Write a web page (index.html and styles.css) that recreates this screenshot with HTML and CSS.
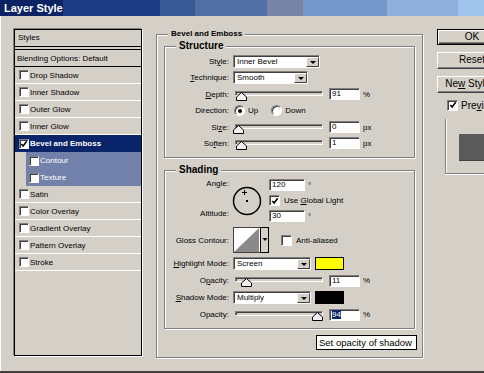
FILE: index.html
```html
<!DOCTYPE html>
<html>
<head>
    <meta charset="utf-8">
    <title>Layer Style</title>
    <link rel="stylesheet" href="styles.css">
</head>
<body>
<div class="window">

    <!-- window caption -->
    <div class="titlebar">Layer Style</div>

    <div class="client">

        <!-- STYLES LIST -->
        <div class="styles-list">
            <div class="list-head">Styles</div>
            <div class="list-row blend">Blending Options: Default</div>
            <div class="list-row"><span class="cb"></span>Drop Shadow</div>
            <div class="list-row"><span class="cb"></span>Inner Shadow</div>
            <div class="list-row"><span class="cb"></span>Outer Glow</div>
            <div class="list-row"><span class="cb"></span>Inner Glow</div>
            <div class="list-row sel"><span class="cb"><svg class="tick" viewBox="0 0 9 9"><path d="M1.5 4.5l2 2.2 4-5.2"/></svg></span>Bevel and Emboss</div>
            <div class="list-row sub"><span class="cb"></span>Contour</div>
            <div class="list-row sub"><span class="cb"></span>Texture</div>
            <div class="list-row"><span class="cb"></span>Satin</div>
            <div class="list-row"><span class="cb"></span>Color Overlay</div>
            <div class="list-row"><span class="cb"></span>Gradient Overlay</div>
            <div class="list-row"><span class="cb"></span>Pattern Overlay</div>
            <div class="list-row"><span class="cb"></span>Stroke</div>
        </div>

        <!-- BEVEL AND EMBOSS -->
        <fieldset class="group main">
            <legend>Bevel and Emboss</legend>

            <fieldset class="group sub-group structure">
                <legend>Structure</legend>
                <div class="rows">
                    <div class="row">
                        <span class="lbl">St<u>y</u>le:</span>
                        <div class="select w87"><span>Inner Bevel</span><span class="drop"></span></div>
                    </div>
                    <div class="row">
                        <span class="lbl"><u>T</u>echnique:</span>
                        <div class="select w75"><span>Smooth</span><span class="drop"></span></div>
                    </div>
                    <div class="row">
                        <span class="lbl"><u>D</u>epth:</span>
                        <div class="slider"><div class="track"></div><svg class="thumb" style="left:3px" viewBox="0 0 11 9"><path d="M5.5 .5 10.5 5v3.5H.5V5z"/></svg></div>
                        <div class="field">91</div><span class="unit">%</span>
                    </div>
                    <div class="row">
                        <span class="lbl">Direction:</span>
                        <span class="radio on"></span><span class="opt">Up</span>
                        <span class="radio second"></span><span class="opt">Down</span>
                    </div>
                    <div class="row">
                        <span class="lbl">Si<u>z</u>e:</span>
                        <div class="slider"><div class="track"></div><svg class="thumb" style="left:0px" viewBox="0 0 11 9"><path d="M5.5 .5 10.5 5v3.5H.5V5z"/></svg></div>
                        <div class="field">0</div><span class="unit">px</span>
                    </div>
                    <div class="row">
                        <span class="lbl">So<u>f</u>ten:</span>
                        <div class="slider"><div class="track"></div><svg class="thumb" style="left:3px" viewBox="0 0 11 9"><path d="M5.5 .5 10.5 5v3.5H.5V5z"/></svg></div>
                        <div class="field">1</div><span class="unit">px</span>
                    </div>
                </div>
            </fieldset>

            <fieldset class="group sub-group shading">
                <legend>Shading</legend>
                <div class="rows">
                    <div class="angle-block">
                        <div class="lbl-col"><span>Angle:</span><span>Altitude:</span></div>
                        <svg class="dial" viewBox="0 0 30 30">
                            <circle cx="15" cy="15" r="13.5"/>
                            <rect x="14" y="14" width="2" height="2"/>
                            <path d="M10 6.5h5M12.5 4v5"/>
                        </svg>
                        <div class="angle-fields">
                            <div class="row"><div class="field wide">120</div><span class="unit">°</span></div>
                            <div class="row"><span class="cb"><svg class="tick" viewBox="0 0 9 9"><path d="M1.5 4.5l2 2.2 4-5.2"/></svg></span><span class="cb-text">Use <u>G</u>lobal Light</span></div>
                            <div class="row"><div class="field wide">30</div><span class="unit">°</span></div>
                        </div>
                    </div>
                    <div class="row tall">
                        <span class="lbl">Gloss Contour:</span>
                        <svg class="contour" viewBox="0 0 36 26">
                            <rect x=".5" y=".5" width="27" height="25" fill="#fff" stroke="#404040"/>
                            <path d="M1 25 26 1v24z" fill="#8a8a8a"/>
                            <rect x="27.5" y=".5" width="8" height="25" fill="#d4d0c8" stroke="#000"/>
                            <path d="M29.5 11h5l-2.5 3z" fill="#000"/>
                        </svg>
                        <span class="cb aa"></span><span class="cb-text">Anti-aliased</span>
                    </div>
                    <div class="row">
                        <span class="lbl"><u>H</u>ighlight Mode:</span>
                        <div class="select w78"><span>Screen</span><span class="drop"></span></div>
                        <span class="swatch yellow"></span>
                    </div>
                    <div class="row">
                        <span class="lbl">O<u>p</u>acity:</span>
                        <div class="slider"><div class="track"></div><svg class="thumb" style="left:8px" viewBox="0 0 11 9"><path d="M5.5 .5 10.5 5v3.5H.5V5z"/></svg></div>
                        <div class="field">11</div><span class="unit">%</span>
                    </div>
                    <div class="row">
                        <span class="lbl"><u>S</u>hadow Mode:</span>
                        <div class="select w78"><span>Multiply</span><span class="drop"></span></div>
                        <span class="swatch black"></span>
                    </div>
                    <div class="row">
                        <span class="lbl">Opacity:</span>
                        <div class="slider"><div class="track"></div><svg class="thumb" style="left:79px" viewBox="0 0 11 9"><path d="M5.5 .5 10.5 5v3.5H.5V5z"/></svg></div>
                        <div class="field"><span class="picked">94</span></div><span class="unit">%</span>
                    </div>
                </div>
            </fieldset>

            <div class="tooltip">Set opacity of shadow</div>
        </fieldset>

        <!-- BUTTONS -->
        <div class="side">
            <div class="btn default">OK</div>
            <div class="btn">Reset</div>
            <div class="btn">Ne<u>w</u> Style...</div>
            <div class="preview-check">
                <span class="cb"><svg class="tick" viewBox="0 0 9 9"><path d="M1.5 4.5l2 2.2 4-5.2"/></svg></span>
                <span>Pre<u>v</u>iew</span>
            </div>
            <div class="preview-box"><div class="preview-swatch"></div></div>
        </div>

    </div>
</div>
</body>
</html>
```

FILE: styles.css
```css
/* GLOBAL THEME */
body        {   margin: 0;
                background-color: #d4d0c8;
                font-family: "Liberation Sans", Arial, sans-serif;
                font-size: 8px;
                color: #000;
            }

u           {   text-underline-offset: 1px; }

.window     {   width: 484px;
                height: 373px;
                overflow: hidden;
                display: flex;
                flex-direction: column;
            }

/* CAPTION */
.titlebar   {   flex: none;
                height: 16px;
                line-height: 16px;
                padding-left: 4px;
                color: white;
                font-size: 11px;
                font-weight: bold;
                background: linear-gradient(to right,
                    #0b2263 0 63px, #1d3b82 63px 160px, #3a5a96 160px 195px,
                    #5070a6 195px 267px, #7784a6 267px 303px, #7496c8 303px 387px,
                    #8fb0dc 387px 458px, #9ec4ec 458px);
            }

.client     {   flex: 1;
                display: flex;
                align-items: flex-start;
                border-bottom: 2px solid #404040;
                box-shadow: inset 1px 0 0 #fff;
            }

/* CHECKBOX (sunken) */
.cb         {   flex: none;
                width: 11px;
                height: 11px;
                box-sizing: border-box;
                display: flex;
                align-items: center;
                justify-content: center;
                background: #fff;
                border: 1px solid;
                border-color: #808080 #fff #fff #808080;
                box-shadow: inset 1px 1px 0 #404040;
            }
.tick       {   width: 8px; height: 8px; }
.tick path  {   fill: none; stroke: #000; stroke-width: 1.7; }
.cb-text    {   margin-left: 4px; }

/* STYLES LIST */
.styles-list {  flex: none;
                margin: 13px 0 0 14px;
                width: 126px;
                height: 325px;
                border: 1px solid #000;
                box-shadow: -1px -1px 0 #808080, 1px 1px 0 #fff;
            }
.list-head  {   height: 16px;
                line-height: 16px;
                padding-left: 3px;
                border-bottom: 1px solid #000;
                margin-bottom: 2px;
            }
.list-row   {   height: 16px;
                display: flex;
                align-items: center;
                padding-left: 4px;
                border-bottom: 1px solid #fff;
            }
.list-row .cb { width: 10px; height: 10px; margin-right: 1px; }
.list-row.blend { padding-left: 2px; border-top: 1px solid #000; border-bottom-color: #000; }
.list-row.sel   { height: 17px; border-bottom: none; background: #0a246a; color: #fff; font-weight: bold; }
.list-row.sub   { height: 17px; border-bottom: none; margin-left: 11px; padding-left: 3px;
                  background: #7181a9; color: #fff; }

/* GROUP BOXES (etched) */
.group      {   margin: 0;
                padding: 0;
                min-width: 0;
                box-sizing: border-box;
                border: 1px solid #808080;
                box-shadow: 1px 1px 0 #fff, inset 1px 1px 0 #fff;
            }
.group > legend { padding: 0 3px; background: #d4d0c8; font-weight: bold; line-height: 10px; }

.main       {   position: relative;
                flex: none;
                margin: 13px 0 0 14px;
                width: 267px;
                height: 329px;
                padding: 1px 7px 0 7px;
            }
.main > legend  { margin-left: 4px; }

.sub-group  {   width: 251px; }
.sub-group > legend { margin-left: 11px; font-size: 10px; line-height: 12px; }
.structure  {   height: 118px; }
.shading    {   height: 165px; margin-top: 6px; }

.rows       {   display: flex; flex-direction: column; padding-top: 3px; }
.structure .rows { gap: 3.4px; }
.shading .rows   { gap: 4px; }

.row        {   display: flex; align-items: center; height: 13px; }
.row.tall   {   height: 26px; }
.lbl        {   flex: none; width: 64px; margin-right: 4px; text-align: right; }
.unit       {   margin-left: 3px; }
.opt        {   margin-left: 3px; }

/* DROPDOWN */
.select     {   height: 13px;
                box-sizing: border-box;
                display: flex;
                align-items: center;
                padding-left: 3px;
                background: #fff;
                border: 1px solid;
                border-color: #808080 #fff #fff #808080;
                box-shadow: inset 1px 1px 0 #404040;
            }
.w87 { width: 87px; }
.w78 { width: 78px; }
.w75 { width: 75px; }
.select .drop { margin-left: auto;
                width: 13px;
                height: 10px;
                margin-top: 1px;
                box-sizing: border-box;
                display: flex;
                align-items: center;
                justify-content: center;
                background: #d4d0c8;
                border: 1px solid;
                border-color: #fff #404040 #404040 #fff;
            }
.select .drop::after { content: ""; border-top: 3px solid #000; border-left: 3px solid transparent; border-right: 3px solid transparent; }

/* TEXT FIELD */
.field      {   flex: none;
                width: 31px;
                height: 12px;
                box-sizing: border-box;
                margin-left: 6px;
                padding-left: 2px;
                line-height: 10px;
                background: #fff;
                border: 1px solid;
                border-color: #808080 #fff #fff #808080;
                box-shadow: inset 1px 1px 0 #404040;
            }
.field.wide {   width: 36px; margin-left: 0; }
.picked     {   background: #0a246a; color: #fff; }

/* SLIDER */
.slider     {   position: relative; flex: none; width: 90px; height: 13px; }
.track      {   margin: 3px 0 0 2px;
                height: 5px;
                box-sizing: border-box;
                border: 1px solid;
                border-color: #808080 #fff #fff #808080;
                box-shadow: inset 1px 1px 0 #404040;
            }
.thumb      {   position: absolute; top: 4px; width: 11px; height: 9px; }
.thumb path {   fill: #f2f2f2; stroke: #000; }

/* RADIO */
.radio      {   flex: none;
                width: 11px;
                height: 11px;
                margin-left: 1px;
                box-sizing: border-box;
                border-radius: 50%;
                display: flex;
                align-items: center;
                justify-content: center;
                background: #fff;
                border: 1px solid;
                border-color: #808080 #fff #fff #808080;
                box-shadow: inset 1px 1px 0 #404040;
            }
.radio.on::after { content: ""; width: 4px; height: 4px; border-radius: 50%; background: #000; }
.radio.second    { margin-left: 13px; }

/* ANGLE / ALTITUDE */
.angle-block { display: flex; height: 43px; margin-bottom: 1px; }
.lbl-col    {   width: 64px;
                display: flex;
                flex-direction: column;
                justify-content: space-between;
                align-items: flex-end;
                padding: 0 0 3px 0;
                line-height: 10px;
            }
.dial       {   width: 30px; height: 30px; margin: 7px 0 0 3px; }
.dial circle {  fill: none; stroke: #000; stroke-width: 1.5; }
.dial path  {   stroke: #000; stroke-width: 1; }
.angle-fields { margin-left: 7px;
                display: flex;
                flex-direction: column;
                justify-content: space-between;
            }
.angle-fields .row { height: 12px; }

.contour    {   width: 36px; height: 26px; }
.cb.aa      {   margin-left: 12px; }

.swatch     {   width: 29px; height: 13px; margin-left: 4px; box-sizing: border-box; border: 1px solid #000; }
.swatch.yellow { background: #ffff00; }
.swatch.black  { background: #000; }

/* TOOLTIP */
.tooltip    {   position: absolute;
                right: 5px;
                bottom: 7px;
                width: 101px;
                height: 15px;
                box-sizing: border-box;
                padding-left: 2px;
                line-height: 13px;
                font-size: 9.5px;
                background: #fffffa;
                border: 1px solid #000;
            }

/* RIGHT BUTTON COLUMN */
.side       {   flex: none;
                width: 80px;
                margin: 13px 0 0 14px;
                display: flex;
                flex-direction: column;
                font-size: 10px;
            }
.btn        {   width: 70px;
                height: 17px;
                box-sizing: border-box;
                margin-bottom: 7px;
                text-align: center;
                line-height: 14px;
                white-space: nowrap;
                background: #d4d0c8;
                border: 1px solid;
                border-color: #fff #404040 #404040 #fff;
                box-shadow: inset -1px -1px 0 #808080;
            }
.btn.default {  height: 16px;
                border-color: #000;
                box-shadow: inset 1px 1px 0 #fff, inset -1px -1px 0 #404040, inset -2px -2px 0 #808080;
            }
.preview-check { display: flex; align-items: center; gap: 3px; margin: -1px 0 0 10px; height: 12px; }
.preview-box {  margin: 8px 0 0 8px;
                height: 55px;
                border-left: 1px solid #808080;
                border-bottom: 1px solid #808080;
                box-shadow: inset 1px 0 0 #fff, 0 1px 0 #fff;
                padding: 15px 0 0 13px;
                box-sizing: border-box;
            }
.preview-swatch { width: 40px; height: 26px; background: #5a5a5a; border-bottom: 1px solid #404040; }
```
